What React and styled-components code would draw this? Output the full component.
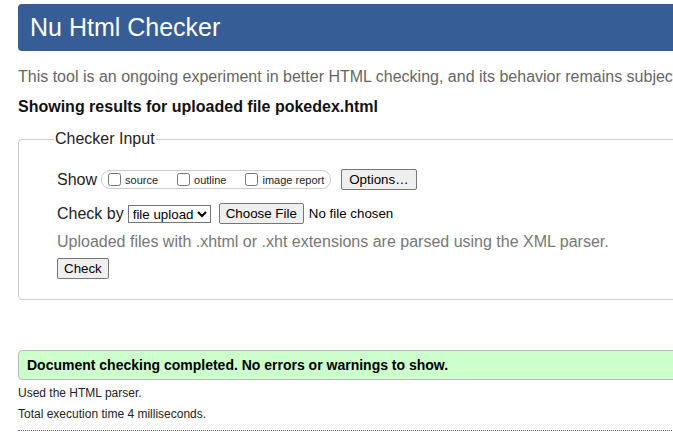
import styled, { createGlobalStyle } from "styled-components";

const GlobalStyle = createGlobalStyle`
  html, body {
    margin: 0;
    padding: 0;
    background: #fff;
    overflow: hidden;
  }
  body {
    font-family: "Liberation Sans", Arial, sans-serif;
    color: #222;
  }
`;

function App() {
  return (
    <Page>
      <GlobalStyle />
      <Title>Nu Html Checker</Title>
      <About>
        This tool is an ongoing experiment in better HTML checking, and its
        behavior remains subject to change
      </About>
      <Results>Showing results for uploaded file pokedex.html</Results>

      <Form onSubmit={(e) => e.preventDefault()}>
        <Fieldset>
          <Legend>Checker Input</Legend>

          <Row>
            <Label>Show</Label>
            <ShowGroup>
              <Option>
                <input type="checkbox" name="showsource" />
                source
              </Option>
              <Option>
                <input type="checkbox" name="showoutline" />
                outline
              </Option>
              <Option $last>
                <input type="checkbox" name="showimagereport" />
                image report
              </Option>
            </ShowGroup>
            <Button type="button" $wide>
              Options…
            </Button>
          </Row>

          <Row $top={13}>
            <Label>Check by</Label>
            <Select defaultValue="file">
              <option value="address">address</option>
              <option value="file">file upload</option>
              <option value="text">text input</option>
            </Select>
            <FileInput type="file" name="file" />
          </Row>

          <Hint>
            Uploaded files with .xhtml or .xht extensions are parsed using the
            XML parser.
          </Hint>

          <Row $top={7}>
            <Button type="submit">Check</Button>
          </Row>
        </Fieldset>
      </Form>

      <Success>
        Document checking completed. No errors or warnings to show.
      </Success>
      <Details>Used the HTML parser.</Details>
      <Details>Total execution time 4 milliseconds.</Details>
      <Rule />
    </Page>
  );
}

const Page = styled.div`
  width: 1000px;
  padding: 4px 0 0 18px;
`;

const Title = styled.h1`
  margin: 0;
  height: 47px;
  padding-left: 12px;
  background: #365d95;
  border-radius: 4px;
  color: #fff;
  font-size: 25px;
  font-weight: normal;
  line-height: 46px;
`;

const About = styled.p`
  margin: 17px 0 0;
  color: #666;
  font-size: 16px;
  line-height: 18px;
  white-space: nowrap;
`;

const Results = styled.h2`
  margin: 12px 0 0;
  color: #111;
  font-size: 16px;
  font-weight: bold;
  line-height: 18px;
`;

const Form = styled.form`
  margin-top: 14px;
`;

const Fieldset = styled.fieldset`
  margin: 0;
  padding: 21px 0 20px 38px;
  border: 1px solid #ccc;
  border-radius: 4px;
`;

const Legend = styled.legend`
  margin-left: -3px;
  padding: 0 1px;
  color: #222;
  font-size: 16px;
  line-height: 18px;
`;

const Row = styled.div`
  display: flex;
  align-items: center;
  margin-top: ${({ $top }) => ($top ? `${$top}px` : "0")};
`;

const Label = styled.span`
  margin-right: 4px;
  font-size: 16px;
  color: #222;
`;

const ShowGroup = styled.span`
  display: inline-flex;
  align-items: center;
  height: 17px;
  padding: 0 6px 0 2px;
  margin-right: 10px;
  border: 1px solid #ccc;
  border-radius: 9px;
`;

const Option = styled.label`
  display: inline-flex;
  align-items: center;
  margin-right: ${({ $last }) => ($last ? "0" : "15px")};
  font-size: 11px;
  color: #222;

  input {
    margin: 0 4px 0 4px;
    width: 13px;
    height: 13px;
  }
`;

const Button = styled.button`
  height: 21px;
  padding: 1px ${({ $wide }) => ($wide ? "7px" : "6px")};
  font-family: "Liberation Sans", Arial, sans-serif;
  font-size: 13.33px;
  color: #000;
  background: #efefef;
  border: 1px solid #767676;
  border-radius: 2px;
`;

const Select = styled.select`
  height: 18px;
  margin-right: 8px;
  padding: 0;
  font-family: "Liberation Sans", Arial, sans-serif;
  font-size: 13.33px;
  color: #000;
  border: 1px solid #767676;
  border-radius: 0;
  background: #fff;
`;

const FileInput = styled.input`
  font-family: "Liberation Sans", Arial, sans-serif;
  font-size: 13.33px;
  color: #000;

  &::file-selector-button {
    height: 21px;
    margin-right: 5px;
    padding: 1px 6px;
    font-family: inherit;
    font-size: 13.33px;
    background: #efefef;
    border: 1px solid #767676;
    border-radius: 2px;
  }
`;

const Hint = styled.p`
  margin: 9px 0 0;
  color: #777;
  font-size: 16px;
  line-height: 18px;
`;

const Success = styled.p`
  margin: 50px 0 0;
  height: 28px;
  padding: 0 8px;
  background: #ccffcc;
  border: 1px solid #bbb;
  border-radius: 4px;
  color: #000;
  font-size: 14px;
  font-weight: bold;
  line-height: 28px;
`;

const Details = styled.p`
  margin: 5px 0 0;
  color: #222;
  font-size: 12px;
  line-height: 16px;
`;

const Rule = styled.hr`
  margin: 8px 0 0;
  border: 0;
  border-top: 1px dotted #666;
`;

export default App;
